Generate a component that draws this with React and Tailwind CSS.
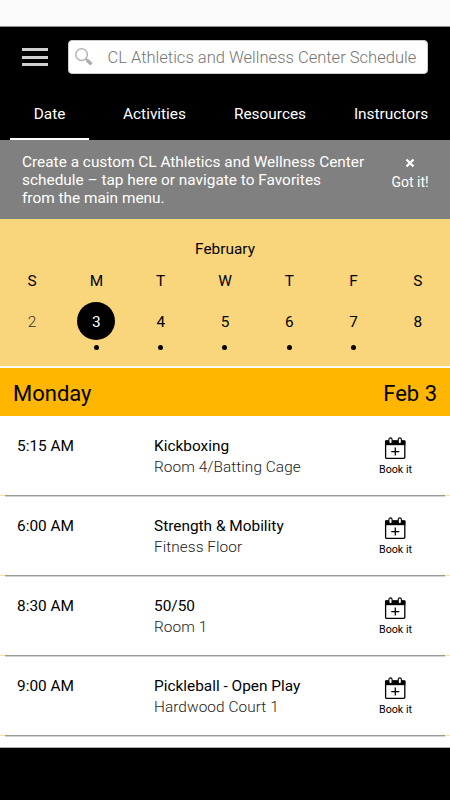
import React, { useState } from "react";

const tabs = [
  { name: "Date", className: "ml-[10px] w-[79px]" },
  { name: "Activities", className: "ml-[10px] w-[111px]" },
  { name: "Resources", className: "w-[120px]" },
  { name: "Instructors", className: "w-[122px]" },
];

const days = [
  { label: "S", date: 2, past: true, hasEvents: false },
  { label: "M", date: 3, hasEvents: true },
  { label: "T", date: 4, hasEvents: true },
  { label: "W", date: 5, hasEvents: true },
  { label: "T", date: 6, hasEvents: true },
  { label: "F", date: 7, hasEvents: true },
  { label: "S", date: 8, hasEvents: false },
];

const classes = [
  { time: "5:15 AM", name: "Kickboxing", room: "Room 4/Batting Cage" },
  { time: "6:00 AM", name: "Strength & Mobility", room: "Fitness Floor" },
  { time: "8:30 AM", name: "50/50", room: "Room 1" },
  { time: "9:00 AM", name: "Pickleball - Open Play", room: "Hardwood Court 1" },
];

function SearchIcon() {
  return (
    <svg viewBox="0 0 18 18" className="w-[18px] h-[18px] shrink-0" fill="none">
      <circle cx="6.6" cy="6.6" r="5.8" stroke="#b5b5b5" strokeWidth="1.5" />
      <path d="M10.6 10.6l2 1.8" stroke="#b5b5b5" strokeWidth="2" />
      <path d="M11.8 12l4.7 4.2" stroke="#ababab" strokeWidth="3.4" />
    </svg>
  );
}

function BookIcon() {
  return (
    <svg viewBox="0 0 22 23" className="mr-px w-[22px] h-[23px]" fill="none">
      <rect x="1.6" y="4" width="19.2" height="17.4" rx="0.8" stroke="#000" strokeWidth="1.3" />
      <path d="M1 3.6h20.4v4.6H1z" fill="#000" />
      <rect x="4.9" y="0.9" width="3.2" height="5.8" rx="1.6" fill="#fff" stroke="#000" strokeWidth="1.1" />
      <rect x="14.2" y="0.9" width="3.2" height="5.8" rx="1.6" fill="#fff" stroke="#000" strokeWidth="1.1" />
      <path d="M11.3 10.6v8M7.3 14.6h8" stroke="#000" strokeWidth="1.3" />
    </svg>
  );
}

export default function App() {
  const [activeTab, setActiveTab] = useState("Date");
  const [selected, setSelected] = useState(3);

  return (
    <div className="w-[450px] h-[800px] overflow-hidden bg-white text-black flex flex-col font-[Roboto,sans-serif] font-normal">
      {/* Status bar */}
      <div className="h-[27px] shrink-0 bg-[#fafafa] border-b border-[#8a8f8f]" />

      {/* Header */}
      <div className="h-[113px] shrink-0 bg-black flex flex-col">
        <div className="flex items-center pt-[13px] pl-[22px]">
          <button className="w-[26px] flex flex-col gap-[4.5px]">
            <span className="h-[3px] bg-[#cfcfcf]" />
            <span className="h-[3px] bg-[#cfcfcf]" />
            <span className="h-[3px] bg-[#cfcfcf]" />
          </button>
          <div className="ml-5 w-[360px] h-[34px] bg-white rounded-[4px] border border-[#cccccc] flex items-center pl-[6px]">
            <SearchIcon />
            <span className="ml-[14.5px] pt-[2px] text-[16.55px] font-light text-[#757575] whitespace-nowrap">
              CL Athletics and Wellness Center Schedule
            </span>
          </div>
        </div>
        <div className="mt-auto h-[52px] flex">
          {tabs.map((tab) => (
            <button
              key={tab.name}
              onClick={() => setActiveTab(tab.name)}
              className={`${tab.className} shrink-0 pt-[4px] text-[15.4px] text-white border-b-2 ${
                activeTab === tab.name ? "border-white" : "border-transparent"
              }`}
            >
              {tab.name}
            </button>
          ))}
        </div>
      </div>

      {/* Favorites notice */}
      <div className="h-[79px] shrink-0 bg-[#808080] text-white flex pt-[13px]">
        <p className="ml-[22px] w-[360px] text-[15.4px] leading-[18px] whitespace-nowrap">
          Create a custom CL Athletics and Wellness Center
          <br />
          schedule – tap here or navigate to Favorites
          <br />
          from the main menu.
        </p>
        <button className="w-[56px] flex flex-col items-center text-sm">
          <svg viewBox="0 0 10 10" className="mt-[5px] w-[10px] h-[10px]">
            <path d="M1.5 1.5l7 7M8.5 1.5l-7 7" stroke="#fff" strokeWidth="2.2" />
          </svg>
          <span className="mt-1">Got it!</span>
        </button>
      </div>

      {/* Week calendar */}
      <div className="h-[147px] shrink-0 bg-[#f9d67b] flex flex-col">
        <div className="mt-5 text-center text-[15.4px] leading-5">February</div>
        <div className="mt-3 grid grid-cols-7">
          {days.map((day) => (
            <button
              key={day.date}
              onClick={() => setSelected(day.date)}
              className="flex flex-col items-center text-[15.4px] leading-5"
            >
              <span>{day.label}</span>
              <span
                className={`mt-[11px] w-[38px] h-[38px] pt-px rounded-full flex items-center justify-center ${
                  selected === day.date
                    ? "bg-black text-white"
                    : day.past
                      ? "font-light text-[#333]"
                      : ""
                }`}
              >
                {day.date}
              </span>
              {day.hasEvents && <span className="mt-[5px] w-[5px] h-[5px] rounded-full bg-black" />}
            </button>
          ))}
        </div>
      </div>

      {/* Day heading */}
      <div className="mt-[2px] h-[48px] shrink-0 bg-[#ffb600] px-[13px] pt-[2px] flex items-center justify-between text-[22px]">
        <span>Monday</span>
        <span>Feb 3</span>
      </div>

      {/* Classes */}
      <div className="flex-1 overflow-hidden">
        {classes.map((item) => (
          <div key={item.time} className="h-[80px] flex flex-col">
            <div className="h-[79px] flex pt-5 text-[15.4px]">
              <span className="ml-[17px] w-[137px] leading-5">{item.time}</span>
              <div className="w-[210px] flex flex-col leading-[21px]">
                <span>{item.name}</span>
                <span className="font-light text-[#222] tracking-[0.06px]">{item.room}</span>
              </div>
              <button className="w-[63px] pt-px flex flex-col items-center text-[10.7px]">
                <BookIcon />
                <span className="pt-[2px]">Book it</span>
              </button>
            </div>
            <div className="flex h-px">
              <span className="w-[5px] bg-[#ffe2a0]" />
              <span className="flex-1 bg-[#999] shadow-[0_1px_0_#d4d4d4]" />
              <span className="w-[5px] bg-[#ffe2a0]" />
            </div>
          </div>
        ))}
      </div>

      {/* Navigation bar */}
      <div className="h-[53px] shrink-0 bg-black border-t border-[#aaa]" />
    </div>
  );
}
